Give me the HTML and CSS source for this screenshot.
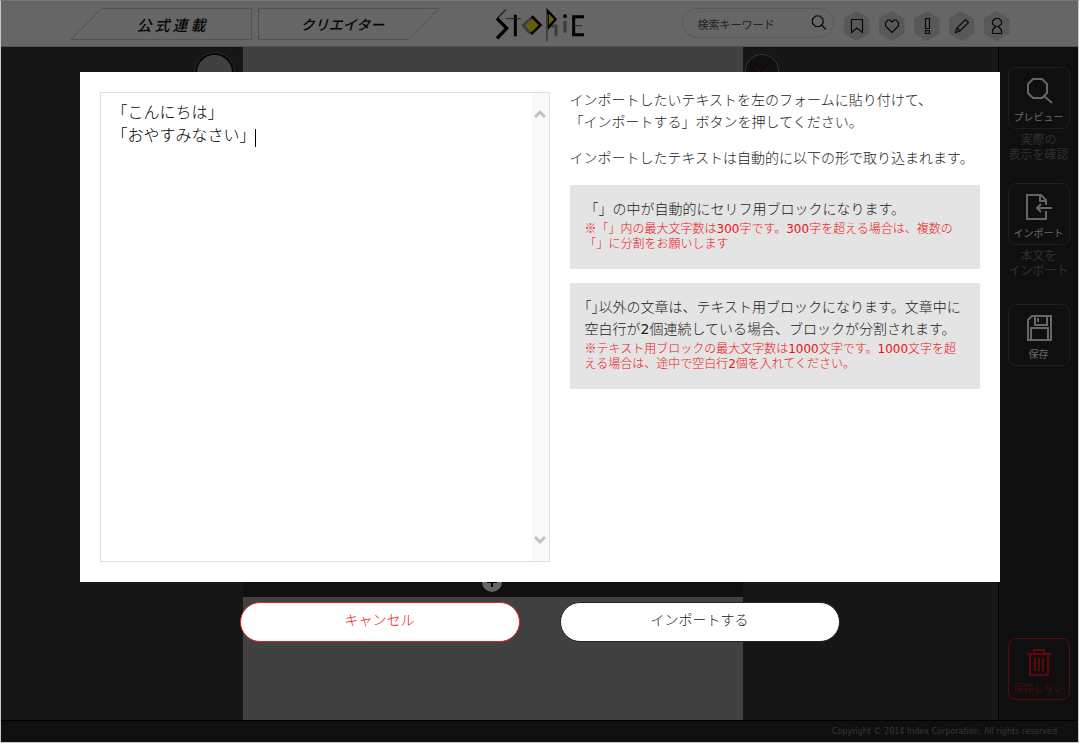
FILE: index.html
```html
<!DOCTYPE html>
<html lang="ja">
<head>
    <meta charset="UTF-8">
    <meta name="viewport" content="width=device-width, initial-scale=1.0">
    <title>STORIE</title>
    <link rel="stylesheet" href="styles.css">
</head>
<body>
    <div class="page">
        <header class="header">
            <div class="header-inner">
                <nav class="tabs">
                    <a href="#" class="tab tab-official">
                        <svg class="tab-shape" viewBox="0 0 182 32"><path d="M.8 31.5L31.5.5H181.500V31.500Z"/></svg>
                        <span>公式連載</span>
                    </a>
                    <a href="#" class="tab">
                        <svg class="tab-shape" viewBox="0 0 182 32"><path d="M.5.5H181L150 31.500H.5Z"/></svg>
                        <span>クリエイター</span>
                    </a>
                </nav>
                <a href="#" class="logo" aria-label="STORIE">
                    <svg width="90" height="35" viewBox="405 20 270 105" fill="none">
                        <path d="M437 28L412 54" stroke="#555" stroke-width="4"/>
                        <path d="M411 54L440 84L411 114" stroke="#000" stroke-width="10"/>
                        <path d="M466 43V108" stroke="#000" stroke-width="9"/>
                        <path d="M438 55H482" stroke="#555" stroke-width="3"/>
                        <path d="M510 99L490 75L520 48" stroke="#999" stroke-width="9"/>
                        <path d="M515 48L541 74L513 101" stroke="#1a0a0a" stroke-width="9"/>
                        <path d="M516 56L535 75L516 94L497 75Z" fill="#ffee00"/>
                        <path d="M588 108V77H572" stroke="#999" stroke-width="9"/>
                        <path d="M563 31L587 57L563 84Z" fill="#ffee00" stroke="#000" stroke-width="7"/>
                        <path d="M561 40V123" stroke="#999" stroke-width="5"/>
                        <circle cx="615" cy="48" r="6" fill="#000"/>
                        <path d="M615 62V97" stroke="#999" stroke-width="10"/>
                        <path d="M672 49H641V103H672" stroke="#000" stroke-width="9"/>
                        <path d="M641 76H666" stroke="#555" stroke-width="3"/>
                    </svg>
                </a>
                <div class="header-tools">
                    <form class="search">
                        <input type="text" placeholder="検索キーワード" aria-label="検索キーワード">
                        <button type="button" aria-label="検索">
                            <svg width="16" height="16" viewBox="0 0 16 16"><path d="M4.500 1H9L12 4V8.500L9 11.500H4.500L1.500 8.500V4ZM10.500 10L15 14.500"/></svg>
                        </button>
                    </form>
                    <div class="hexes">
                        <a href="#" class="hex" aria-label="しおり"><svg width="16" height="16" viewBox="0 0 16 16"><path d="M2.500 1.500H13.500V14.500L8 10L2.500 14.500Z"/></svg></a>
                        <a href="#" class="hex" aria-label="お気に入り"><svg width="16" height="16" viewBox="0 0 16 16"><path d="M8 4L6 2H4L1.500 4.500V8L8 14.500L14.500 8V4.500L12 2H10Z"/></svg></a>
                        <a href="#" class="hex" aria-label="お知らせ"><svg width="16" height="18" viewBox="0 0 16 18"><path d="M6.500 1.500H10.500V11.500H6.500ZM6.500 13.500H10.500V16.500H6.500Z"/></svg></a>
                        <a href="#" class="hex" aria-label="書く"><svg width="16" height="16" viewBox="0 0 16 16"><path d="M1.500 14.500L3 10L11.500 1.500L14.500 4.500L6 13ZM3 10L6 13"/></svg></a>
                        <a href="#" class="hex" aria-label="マイページ"><svg width="16" height="18" viewBox="0 0 16 18"><path d="M6 1.500H10L12.500 4V7L9.500 9.500H6.500L3.500 7V4ZM6.500 9.500L3.500 13V16.500H12.500V13L9.500 9.500"/></svg></a>
                    </div>
                </div>
            </div>
        </header>

        <main class="main">
            <div class="editor">
                <div class="side-left"><span class="avatar"></span></div>
                <div class="canvas">
                    <div class="block-bar">
                        <button type="button" class="add" aria-label="ブロックを追加">
                            <svg width="20" height="20" viewBox="0 0 20 20"><path d="M5 10H15M10 5V15"/></svg>
                        </button>
                    </div>
                </div>
                <div class="side-right">
                    <button type="button" class="remove" aria-label="削除">
                        <svg width="14" height="14" viewBox="0 0 14 14"><path d="M1 1L13 13M13 1L1 13"/></svg>
                    </button>
                </div>
            </div>

            <aside class="sidebar">
                <div class="tool">
                    <button type="button">
                        <svg width="28" height="28" viewBox="0 0 28 28"><path d="M8 2H17L22 7V16L17 21H8L3 16V7ZM19 19L27 26"/></svg>
                        <span>プレビュー</span>
                    </button>
                    <p>実際の<br>表示を確認</p>
                </div>
                <div class="tool">
                    <button type="button">
                        <svg width="28" height="28" viewBox="0 0 28 28"><path d="M21 12V7L16 2H2V26H21V18M15 2V8H21M27 15H12M16 11L12 15L16 19"/></svg>
                        <span>インポート</span>
                    </button>
                    <p>本文を<br>インポート</p>
                </div>
                <div class="tool tool-save">
                    <button type="button">
                        <svg width="28" height="28" viewBox="0 0 28 28"><path d="M7 2H26V26H3V6ZM10 2V11H22V2M13 4V8M6 26V14H23V26"/></svg>
                        <span>保存</span>
                    </button>
                </div>
                <div class="tool tool-discard">
                    <button type="button">
                        <svg width="28" height="28" viewBox="0 0 28 28"><path d="M2 6H26M9 6V2H19V6M5 6V27H23V6M10 10V23M14 10V23M18 10V23"/></svg>
                        <span>保存しない</span>
                    </button>
                </div>
            </aside>
        </main>

        <footer class="footer">Copyright © 2014 Index Corporation. All rights reserved</footer>

        <div class="overlay">
            <div class="modal" role="dialog" aria-label="インポート">
                <div class="import-form">
                    <textarea id="importText" aria-label="インポートするテキスト">「こんにちは」
「おやすみなさい」</textarea>
                    <span class="caret"></span>
                    <div class="scrollbar">
                        <svg width="12" height="10" viewBox="0 0 12 10"><path d="M1 8L6 3L11 8"/></svg>
                        <svg width="12" height="10" viewBox="0 0 12 10"><path d="M1 2L6 7L11 2"/></svg>
                    </div>
                </div>
                <div class="guide">
                    <p>インポートしたいテキストを左のフォームに貼り付けて、<br>「インポートする」ボタンを押してください。</p>
                    <p>インポートしたテキストは自動的に以下の形で取り込まれます。</p>
                    <div class="note">
                        「」の中が自動的にセリフ用ブロックになります。
                        <small>※「」内の最大文字数は<span class="num">300</span>字です。<span class="num">300</span>字を超える場合は、複数の<br>「」に分割をお願いします</small>
                    </div>
                    <div class="note">
                        ｢｣以外の文章は、テキスト用ブロックになります。文章中に<br>空白行が<span class="num">2</span>個連続している場合、ブロックが分割されます。
                        <small>※テキスト用ブロックの最大文字数は<span class="num">1000</span>文字です。<span class="num">1000</span>文字を超<br>える場合は、途中で空白行<span class="num">2</span>個を入れてください。</small>
                    </div>
                </div>
            </div>
            <div class="actions">
                <button type="button" class="btn btn-cancel">キャンセル</button>
                <button type="button" class="btn">インポートする</button>
            </div>
        </div>
    </div>
</body>
</html>
```
FILE: styles.css
```css
* {
    box-sizing: border-box;
}
body {
    margin: 0;
    font-family: "Noto Sans CJK JP", sans-serif;
    font-size: 14px;
    color: #222;
}
button, input, textarea {
    font-family: inherit;
}
button {
    padding: 0;
    cursor: pointer;
}
a {
    color: inherit;
    text-decoration: none;
}
svg {
    display: block;
    fill: none;
}
.page {
    position: relative;
    display: flex;
    flex-direction: column;
    min-height: 100vh;
    border: 1px solid #c8c8c8;
    border-top-color: #777;
}

/* header */
.header {
    background: #fff;
    border-bottom: 1px solid #ccc;
}
.header-inner {
    display: grid;
    grid-template-columns: 1fr auto 1fr;
    align-items: start;
    max-width: 940px;
    height: 45px;
    margin: 0 auto;
}
.tabs {
    display: flex;
    gap: 6px;
    padding-top: 7px;
}
.tab {
    display: grid;
    place-items: center;
    width: 182px;
    height: 32px;
    font-size: 14px;
    font-weight: 500;
    font-style: italic;
    color: #111;
}
.tab > * {
    grid-area: 1 / 1;
}
.tab-shape {
    width: 100%;
    stroke: #ccc;
}
.tab span {
    padding-right: 12px;
}
.tab-official span {
    padding: 0 0 0 24px;
    font-size: 15px;
    letter-spacing: 3px;
}
.logo {
    padding-top: 6px;
}
.header-tools {
    display: flex;
    justify-content: flex-end;
    gap: 10px;
    padding-top: 7px;
}
.search {
    display: flex;
    align-items: center;
    width: 152px;
    height: 30px;
    padding: 0 6px 0 15px;
    border: 1px solid #ddd;
    border-radius: 15px;
}
.search input {
    flex: 1;
    min-width: 0;
    padding: 2px 0 0;
    border: none;
    outline: none;
    font-size: 11px;
    background: none;
}
.search input::placeholder {
    color: #555;
}
.search button {
    border: none;
    background: none;
}
.search svg, .hex svg {
    stroke: #111;
    stroke-width: 1.2;
}
.hexes {
    display: flex;
    gap: 9px;
    padding-top: 3px;
}
.hex {
    display: flex;
    align-items: center;
    justify-content: center;
    width: 26px;
    height: 30px;
    background: #ddd;
    clip-path: polygon(50% 0, 100% 25%, 100% 75%, 50% 100%, 0 75%, 0 25%);
}

/* editor */
.main {
    flex: 1;
    display: flex;
    background: #393939;
}
.editor {
    flex: 1;
    display: grid;
    grid-template-columns: 1fr 500px 1fr;
    padding-right: 13px;
}
.side-left {
    display: flex;
    justify-content: flex-end;
    padding: 6px 9px 0 0;
}
.avatar {
    width: 39px;
    height: 39px;
    border: 2px solid #111;
    border-radius: 50%;
    outline: 1px solid #666;
    background: #a3a3a3;
}
.side-right {
    padding: 7px 0 0 2px;
}
.remove {
    display: flex;
    align-items: center;
    justify-content: center;
    width: 34px;
    height: 34px;
    padding-top: 6px;
    border: 1px solid #888;
    border-radius: 50%;
    background: #262626;
    stroke: #e61717;
}
.canvas {
    padding-top: 500px;
    background: #a3a3a3;
}
.block-bar {
    display: flex;
    align-items: flex-end;
    justify-content: center;
    height: 50px;
    padding: 0 2px 5px 0;
    background: #262626;
}
.add {
    border: none;
    border-radius: 50%;
    background: #fff;
    stroke: #000;
    stroke-width: 2;
}

/* sidebar */
.sidebar {
    display: flex;
    flex-direction: column;
    align-items: center;
    gap: 22px;
    width: 80px;
    padding: 20px 0;
    border-left: 1px solid #000;
    background: #262626;
}
.tool button {
    display: flex;
    flex-direction: column;
    align-items: center;
    justify-content: space-between;
    width: 62px;
    height: 62px;
    margin: 0 auto;
    padding: 9px 0 4px;
    border: 1px solid #4c4c4c;
    border-radius: 8px;
    font-size: 10px;
    line-height: 14px;
    color: #fff;
    background: none;
    stroke: #fff;
    stroke-width: 2;
}
.tool p {
    margin: 2px 0 0;
    font-size: 12px;
    line-height: 15px;
    text-align: center;
    color: #777;
}
.tool-save {
    margin-top: 5px;
}
.tool-discard {
    margin-top: auto;
}
.tool-discard button {
    border-color: #e61717;
    color: #b01717;
    stroke: #e61717;
}
.footer {
    height: 22px;
    padding-right: 21px;
    border-top: 1px solid #000;
    font-family: "DejaVu Sans", sans-serif;
    font-size: 8px;
    line-height: 22px;
    text-align: right;
    color: #888;
    background: #262626;
}

/* import dialog */
.overlay {
    position: absolute;
    inset: 0;
    display: flex;
    flex-direction: column;
    align-items: center;
    gap: 20px;
    padding-top: 71px;
    background: rgba(0, 0, 0, 0.6);
}
.modal {
    display: grid;
    grid-template-columns: 450px 1fr;
    gap: 20px;
    width: 920px;
    max-width: 100%;
    padding: 20px;
    background: #fff;
}
.import-form {
    position: relative;
    display: flex;
    height: 470px;
    border: 1px solid #e0e0e0;
}
.import-form textarea {
    flex: 1;
    padding: 7px 11px;
    border: none;
    outline: none;
    resize: none;
    font-size: 16px;
    font-weight: 300;
    line-height: 23px;
    color: #000;
}
.caret {
    position: absolute;
    top: 36px;
    left: 154px;
    width: 1px;
    height: 18px;
    background: #000;
}
.scrollbar {
    display: flex;
    flex-direction: column;
    align-items: center;
    justify-content: space-between;
    width: 17px;
    padding: 16px 0;
    background: #f9f9f9;
    stroke: #c0c0c0;
    stroke-width: 3;
}
.guide {
    font-weight: 300;
    line-height: 22px;
}
.guide p {
    margin: 0 0 14px;
}
.guide p:first-child {
    margin-top: -4px;
}
.guide p + .note {
    margin-top: 17px;
}
.note {
    margin-top: 14px;
    padding: 12px 15px 19px;
    background: #e4e4e4;
}
.note small {
    display: block;
    margin-top: 1px;
    font-size: 12px;
    line-height: 15px;
    color: #e11;
}
.num {
    font-family: "DejaVu Sans", sans-serif;
    font-weight: 400;
    line-height: 1;
}
.actions {
    display: flex;
    gap: 40px;
}
.btn {
    width: 280px;
    height: 40px;
    padding-bottom: 6px;
    border: 1px solid #222;
    border-radius: 20px;
    font-size: 14px;
    font-weight: 300;
    color: #222;
    background: #fff;
}
.btn-cancel {
    border-color: #d22;
    color: #e11;
}
```
